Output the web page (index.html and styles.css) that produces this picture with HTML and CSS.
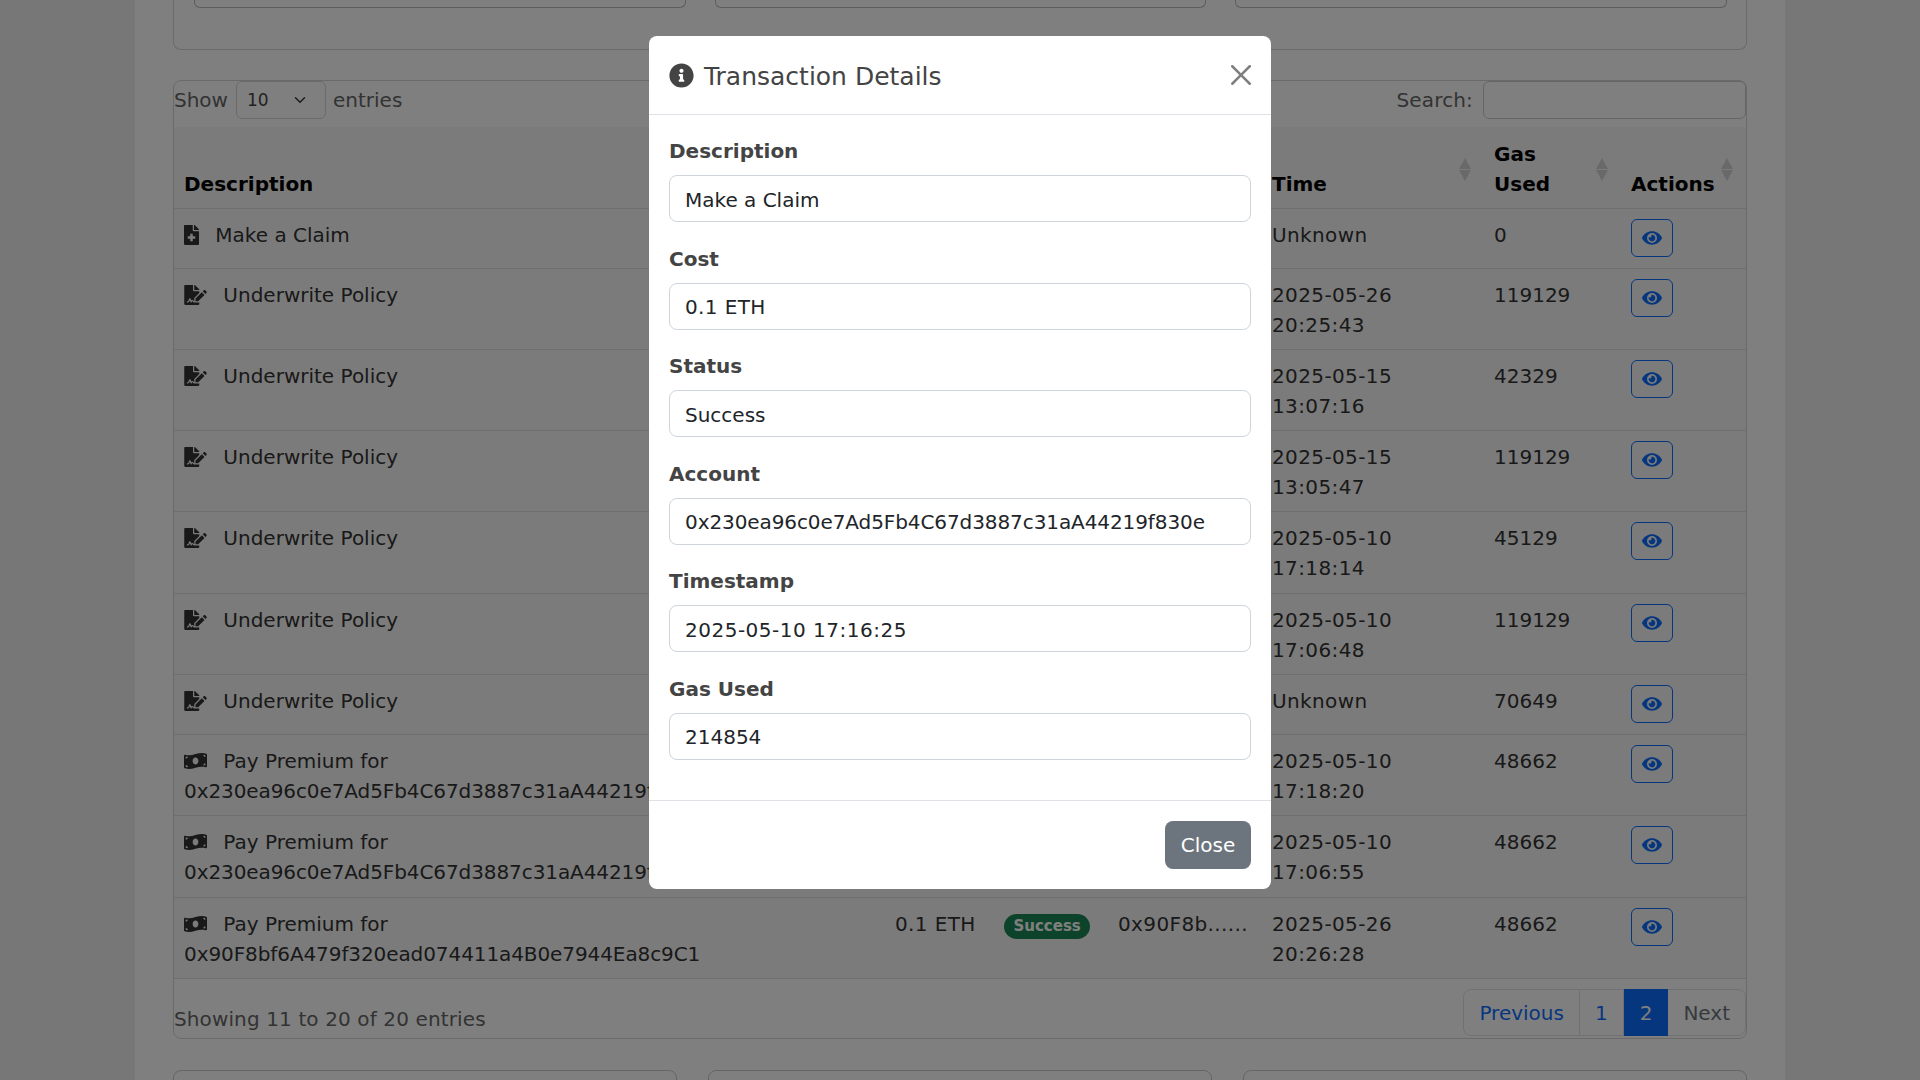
FILE: index.html
```html
<!DOCTYPE html>
<html lang="en">
<head>
    <meta charset="utf-8">
    <title>Transactions</title>
    <link rel="stylesheet" href="styles.css">
</head>
<body>
<svg class="icon-defs" xmlns="http://www.w3.org/2000/svg">
    <symbol id="i-eye" viewBox="0 0 576 512"><path d="M572.52 241.4C518.29 135.59 410.93 64 288 64S57.68 135.64 3.48 241.41a32.35 32.35 0 0 0 0 29.19C57.71 376.41 165.07 448 288 448s230.32-71.64 284.52-177.41a32.35 32.35 0 0 0 0-29.19zM288 400a144 144 0 1 1 144-144 143.93 143.93 0 0 1-144 144zm0-240a95.31 95.31 0 0 0-25.31 3.79 47.85 47.85 0 0 1-66.9 66.9A95.78 95.78 0 1 0 288 160z"/></symbol>
    <symbol id="i-info" viewBox="0 0 512 512"><path d="M256 8C119.043 8 8 119.083 8 256c0 136.997 111.043 248 248 248s248-111.003 248-248C504 119.083 392.957 8 256 8zm0 110c23.196 0 42 18.804 42 42s-18.804 42-42 42-42-18.804-42-42 18.804-42 42-42zm56 254c0 6.627-5.373 12-12 12h-88c-6.627 0-12-5.373-12-12v-24c0-6.627 5.373-12 12-12h12v-64h-12c-6.627 0-12-5.373-12-12v-24c0-6.627 5.373-12 12-12h64c6.627 0 12 5.373 12 12v100h12c6.627 0 12 5.373 12 12v24z"/></symbol>
    <symbol id="i-claim" viewBox="0 0 384 512"><path d="M377 105L279.1 7c-4.5-4.5-10.6-7-17-7H256v128h128v-6.1c0-6.3-2.5-12.4-7-16.9zm-153 31V0H24C10.7 0 0 10.7 0 24v464c0 13.3 10.7 24 24 24h336c13.3 0 24-10.7 24-24V160H248c-13.2 0-24-10.8-24-24zm64 160v48c0 4.4-3.6 8-8 8h-56v56c0 4.4-3.6 8-8 8h-48c-4.4 0-8-3.6-8-8v-56h-56c-4.4 0-8-3.6-8-8v-48c0-4.4 3.6-8 8-8h56v-56c0-4.4 3.6-8 8-8h48c4.4 0 8 3.6 8 8v56h56c4.4 0 8 3.6 8 8z"/></symbol>
    <symbol id="i-sign" viewBox="0 0 576 512"><path d="M218.17 424.14c-2.95-5.92-8.09-6.52-10.17-6.52s-7.22.59-10.02 6.19l-7.67 15.34c-6.37 12.78-25.03 11.37-29.48-2.09L144 386.59l-10.61 31.88c-5.89 17.66-22.38 29.53-41 29.53H80c-8.84 0-16-7.16-16-16s7.16-16 16-16h12.39c4.83 0 9.11-3.08 10.64-7.66l18.19-54.64c3.3-9.81 12.44-16.41 22.78-16.41s19.48 6.59 22.77 16.41l13.88 41.64c19.75-16.19 54.06-9.7 66 14.16 1.89 3.78 5.49 5.95 9.36 6.26v-82.12l128-127.09V160H248c-13.2 0-24-10.8-24-24V0H24C10.7 0 0 10.7 0 24v464c0 13.3 10.7 24 24 24h336c13.3 0 24-10.7 24-24v-40l-128-.11c-16.12-.31-30.58-9.28-37.83-23.75zM384 121.9c0-6.3-2.5-12.4-7-16.9L279.1 7c-4.5-4.5-10.6-7-17-7H256v128h128v-6.1zm-96 225.06V416h68.99l161.68-162.78-67.88-67.88L288 346.96zm280.54-179.63l-31.87-31.87c-9.94-9.94-26.07-9.94-36.01 0l-27.25 27.25 67.88 67.88 27.25-27.25c9.95-9.94 9.95-26.07 0-36.01z"/></symbol>
    <symbol id="i-money" viewBox="0 0 640 512"><path d="M621.16 54.46C582.37 38.19 543.55 32 504.75 32c-123.17-.01-246.33 62.34-369.5 62.34-30.89 0-61.76-3.92-92.65-13.72-3.47-1.1-6.95-1.62-10.35-1.62C15.04 79 0 92.32 0 110.81v317.26c0 12.63 7.23 24.6 18.84 29.46C57.63 473.81 96.45 480 135.25 480c123.17 0 246.34-62.35 369.51-62.35 30.89 0 61.76 3.92 92.65 13.72 3.47 1.1 6.95 1.62 10.35 1.62 17.21 0 32.25-13.32 32.25-31.81V83.93c-.01-12.64-7.24-24.6-18.85-29.47zM48 132.22c20.12 5.04 41.12 7.57 62.72 8.93C104.84 170.54 79 192.69 48 192.69v-60.47zm0 285v-47.78c34.37 0 62.18 27.27 63.71 61.4-22.53-1.81-43.59-6.31-63.71-13.62zM320 352c-44.19 0-80-42.99-80-96 0-53.02 35.82-96 80-96s80 42.98 80 96c0 53.03-35.83 96-80 96zm272 27.78c-17.52-4.39-35.71-6.85-54.32-8.44 5.87-26.08 27.5-45.88 54.32-49.28v57.72zm0-236.11c-30.89-3.91-54.86-29.7-55.81-61.55 19.54 2.17 38.09 6.23 55.81 12.66v48.89z"/></symbol>
</svg>

<div class="container">
    <div class="summary-card">
        <div class="summary-box"></div>
        <div class="summary-box"></div>
        <div class="summary-box"></div>
    </div>

    <div class="table-card">
        <div class="table-controls">
            <label class="length-label">Show
                <select class="length-select"><option>10</option></select>
                entries</label>
            <label class="search-label">Search: <input class="search-input" type="search"></label>
        </div>

        <table class="tx-table">
            <thead>
                <tr>
                    <th class="col-desc sortable">Description</th>
                    <th class="col-cost sortable">Cost</th>
                    <th class="col-status sortable">Status</th>
                    <th class="col-account sortable">Account</th>
                    <th class="col-time sortable">Time</th>
                    <th class="col-gas sortable">Gas<br>Used</th>
                    <th class="col-actions sortable">Actions</th>
                </tr>
            </thead>
            <tbody>
                <tr class="short-row">
                    <td><svg class="row-icon"><use href="#i-claim"/></svg> Make a Claim</td>
                    <td class="spaced">0.1 ETH</td>
                    <td><span class="badge">Success</span></td>
                    <td class="spaced">0x230ea......</td>
                    <td class="spaced">Unknown</td>
                    <td>0</td>
                    <td><button class="btn-view"><svg class="eye"><use href="#i-eye"/></svg></button></td>
                </tr>
                <tr>
                    <td><svg class="row-icon wide"><use href="#i-sign"/></svg> Underwrite Policy</td>
                    <td class="spaced">0.1 ETH</td>
                    <td><span class="badge">Success</span></td>
                    <td class="spaced">0x90F8b......</td>
                    <td class="spaced">2025-05-26<br>20:25:43</td>
                    <td>119129</td>
                    <td><button class="btn-view"><svg class="eye"><use href="#i-eye"/></svg></button></td>
                </tr>
                <tr>
                    <td><svg class="row-icon wide"><use href="#i-sign"/></svg> Underwrite Policy</td>
                    <td class="spaced">0.1 ETH</td>
                    <td><span class="badge">Success</span></td>
                    <td class="spaced">0x90F8b......</td>
                    <td class="spaced">2025-05-15<br>13:07:16</td>
                    <td>42329</td>
                    <td><button class="btn-view"><svg class="eye"><use href="#i-eye"/></svg></button></td>
                </tr>
                <tr>
                    <td><svg class="row-icon wide"><use href="#i-sign"/></svg> Underwrite Policy</td>
                    <td class="spaced">0.1 ETH</td>
                    <td><span class="badge">Success</span></td>
                    <td class="spaced">0x90F8b......</td>
                    <td class="spaced">2025-05-15<br>13:05:47</td>
                    <td>119129</td>
                    <td><button class="btn-view"><svg class="eye"><use href="#i-eye"/></svg></button></td>
                </tr>
                <tr>
                    <td><svg class="row-icon wide"><use href="#i-sign"/></svg> Underwrite Policy</td>
                    <td class="spaced">0.1 ETH</td>
                    <td><span class="badge">Success</span></td>
                    <td class="spaced">0x90F8b......</td>
                    <td class="spaced">2025-05-10<br>17:18:14</td>
                    <td>45129</td>
                    <td><button class="btn-view"><svg class="eye"><use href="#i-eye"/></svg></button></td>
                </tr>
                <tr>
                    <td><svg class="row-icon wide"><use href="#i-sign"/></svg> Underwrite Policy</td>
                    <td class="spaced">0.1 ETH</td>
                    <td><span class="badge">Success</span></td>
                    <td class="spaced">0x90F8b......</td>
                    <td class="spaced">2025-05-10<br>17:06:48</td>
                    <td>119129</td>
                    <td><button class="btn-view"><svg class="eye"><use href="#i-eye"/></svg></button></td>
                </tr>
                <tr class="short-row">
                    <td><svg class="row-icon wide"><use href="#i-sign"/></svg> Underwrite Policy</td>
                    <td class="spaced">0.1 ETH</td>
                    <td><span class="badge">Success</span></td>
                    <td class="spaced">0x90F8b......</td>
                    <td class="spaced">Unknown</td>
                    <td>70649</td>
                    <td><button class="btn-view"><svg class="eye"><use href="#i-eye"/></svg></button></td>
                </tr>
                <tr>
                    <td><svg class="row-icon wide"><use href="#i-money"/></svg> Pay Premium for<br><span class="address">0x230ea96c0e7Ad5Fb4C67d3887c31aA44219f830e</span></td>
                    <td class="spaced">0.1 ETH</td>
                    <td><span class="badge">Success</span></td>
                    <td class="spaced">0x230ea......</td>
                    <td class="spaced">2025-05-10<br>17:18:20</td>
                    <td>48662</td>
                    <td><button class="btn-view"><svg class="eye"><use href="#i-eye"/></svg></button></td>
                </tr>
                <tr>
                    <td><svg class="row-icon wide"><use href="#i-money"/></svg> Pay Premium for<br><span class="address">0x230ea96c0e7Ad5Fb4C67d3887c31aA44219f830e</span></td>
                    <td class="spaced">0.1 ETH</td>
                    <td><span class="badge">Success</span></td>
                    <td class="spaced">0x230ea......</td>
                    <td class="spaced">2025-05-10<br>17:06:55</td>
                    <td>48662</td>
                    <td><button class="btn-view"><svg class="eye"><use href="#i-eye"/></svg></button></td>
                </tr>
                <tr>
                    <td><svg class="row-icon wide"><use href="#i-money"/></svg> Pay Premium for<br><span class="address">0x90F8bf6A479f320ead074411a4B0e7944Ea8c9C1</span></td>
                    <td class="spaced">0.1 ETH</td>
                    <td><span class="badge">Success</span></td>
                    <td class="spaced">0x90F8b......</td>
                    <td class="spaced">2025-05-26<br>20:26:28</td>
                    <td>48662</td>
                    <td><button class="btn-view"><svg class="eye"><use href="#i-eye"/></svg></button></td>
                </tr>
            </tbody>
        </table>

        <div class="table-footer">
            <div class="table-info">Showing 11 to 20 of 20 entries</div>
            <ul class="pagination">
                <li class="page-item">Previous</li>
                <li class="page-item">1</li>
                <li class="page-item active">2</li>
                <li class="page-item disabled">Next</li>
            </ul>
        </div>
    </div>

    <div class="bottom-cards">
        <div class="bottom-card"></div>
        <div class="bottom-card"></div>
        <div class="bottom-card"></div>
    </div>
</div>

<div class="modal-backdrop"></div>
<div class="modal">
    <div class="modal-dialog">
        <div class="modal-header">
            <h5 class="modal-title"><svg class="title-icon"><use href="#i-info"/></svg> Transaction Details</h5>
            <svg class="btn-close" viewBox="0 0 16 16"><path d="M.293.293a1 1 0 0 1 1.414 0L8 6.586 14.293.293a1 1 0 1 1 1.414 1.414L9.414 8l6.293 6.293a1 1 0 0 1-1.414 1.414L8 9.414l-6.293 6.293a1 1 0 0 1-1.414-1.414L6.586 8 .293 1.707a1 1 0 0 1 0-1.414z"/></svg>
        </div>
        <div class="modal-body">
            <div class="field">
                <label class="field-label">Description</label>
                <input class="field-input" type="text" value="Make a Claim" readonly>
            </div>
            <div class="field">
                <label class="field-label">Cost</label>
                <input class="field-input spaced" type="text" value="0.1 ETH" readonly>
            </div>
            <div class="field">
                <label class="field-label">Status</label>
                <input class="field-input" type="text" value="Success" readonly>
            </div>
            <div class="field">
                <label class="field-label">Account</label>
                <input class="field-input address" type="text" value="0x230ea96c0e7Ad5Fb4C67d3887c31aA44219f830e" readonly>
            </div>
            <div class="field">
                <label class="field-label">Timestamp</label>
                <input class="field-input timestamp" type="text" value="2025-05-10 17:16:25" readonly>
            </div>
            <div class="field">
                <label class="field-label">Gas Used</label>
                <input class="field-input" type="text" value="214854" readonly>
            </div>
        </div>
        <div class="modal-footer">
            <button class="btn-close-modal">Close</button>
        </div>
    </div>
</div>
</body>
</html>
```

FILE: styles.css
```css
* {
    box-sizing: border-box;
}

html, body {
    height: 1080px;
    overflow: hidden;
}

body {
    margin: 0;
    background-color: #eeeeee;
    font-family: "DejaVu Sans", sans-serif;
    font-size: 20px;
    line-height: 30px;
    color: #333333;
    text-rendering: optimizeSpeed;
}

.icon-defs {
    display: none;
}

.spaced {
    letter-spacing: 0.38px;
}

.timestamp {
    letter-spacing: 0.5px;
}

.address {
    letter-spacing: -0.09px;
}

.container {
    width: 1650px;
    height: 1080px;
    margin: 0 auto;
    padding: 0 38px;
    background-color: #ffffff;
}

/* cards cut off by the scroll position */
.summary-card {
    display: grid;
    grid-template-columns: repeat(3, 1fr);
    gap: 29px;
    height: 50px;
    padding: 0 19px 0 20px;
    border: 1px solid #d5d5d5;
    border-top: 0;
    border-radius: 0 0 8px 8px;
}

.summary-box {
    height: 8px;
    border: 1px solid #bbbbbb;
    border-top: 0;
    border-radius: 0 0 6px 6px;
}

.bottom-cards {
    display: grid;
    grid-template-columns: repeat(3, 1fr);
    gap: 31px;
    margin-top: 31px;
}

.bottom-card {
    height: 100px;
    border: 1px solid #cccccc;
    border-radius: 8px;
}

/* table card */
.table-card {
    height: 959px;
    margin-top: 30px;
    border: 1px solid #d5d5d5;
    border-radius: 8px;
}

.table-controls {
    display: flex;
    justify-content: space-between;
    height: 46px;
    color: #666666;
}

.length-label, .search-label {
    display: flex;
    align-items: center;
    height: 38px;
}

.length-select {
    width: 90px;
    height: 38px;
    margin: 0 7px 0 8px;
    padding: 0 10px;
    border: 1px solid #d5d5d5;
    border-radius: 6px;
    appearance: none;
    background: #ffffff url("data:image/svg+xml,%3csvg xmlns='http://www.w3.org/2000/svg' viewBox='0 0 16 16'%3e%3cpath fill='none' stroke='%23343a40' stroke-linecap='round' stroke-linejoin='round' stroke-width='2' d='m2 5 6 6 6-6'/%3e%3c/svg%3e") no-repeat right 17px center / 16px 12px;
    font-family: "DejaVu Sans", sans-serif;
    font-size: 17px;
    color: #444444;
}

.search-label {
    letter-spacing: 0.15px;
}

.search-input {
    width: 263px;
    height: 38px;
    margin-left: 10px;
    border: 1px solid #cccccc;
    border-radius: 6px;
    background: #ffffff;
}

.tx-table {
    width: 100%;
    border-collapse: collapse;
    table-layout: fixed;
    background-color: #f7f7f7;
}

.tx-table th {
    position: relative;
    height: 81px;
    padding: 10px 10px 9px;
    border-bottom: 1px solid #dedede;
    vertical-align: bottom;
    text-align: left;
    color: #000000;
}

.sortable::before, .sortable::after {
    content: "";
    position: absolute;
    right: 13px;
    border-left: 6px solid transparent;
    border-right: 6px solid transparent;
}

.sortable::before {
    top: 31px;
    border-bottom: 11px solid #d2d2d2;
}

.sortable::after {
    top: 43px;
    border-top: 11px solid #d2d2d2;
}

.col-desc { width: 711px; }
.col-cost { width: 109px; }
.col-status { width: 114px; }
.col-account { width: 154px; }
.col-time { width: 222px; }
.col-gas { width: 137px; }

.tx-table td {
    height: 81.3px;
    padding: 11px 10px 9px;
    border-bottom: 1px solid #dedede;
    vertical-align: top;
    white-space: nowrap;
    overflow: hidden;
}

.tx-table .short-row td {
    height: 60px;
}

.row-icon {
    width: 15px;
    height: 20px;
    margin-right: 10px;
    vertical-align: -3px;
    fill: #333333;
}

.row-icon.wide {
    width: 23px;
}

.badge {
    display: inline-block;
    padding: 5px 9.5px;
    border-radius: 13px;
    background-color: #198754;
    font-size: 15px;
    font-weight: 700;
    line-height: 15px;
    color: #ffffff;
}

.btn-view {
    display: flex;
    align-items: center;
    justify-content: center;
    width: 42px;
    height: 38px;
    margin-top: -1px;
    padding: 0;
    border: 1px solid #0d6efd;
    border-radius: 6px;
    background: transparent;
}

.eye {
    width: 20px;
    height: 18px;
    fill: #0d6efd;
}

.table-footer {
    display: flex;
    justify-content: space-between;
    height: 60px;
    padding-top: 10px;
    color: #666666;
}

.table-info {
    padding-top: 15px;
    letter-spacing: 0.12px;
}

.pagination {
    display: flex;
    height: 47px;
    margin: 0;
    padding: 0;
    border: 1px solid #dee2e6;
    border-radius: 8px;
    list-style: none;
    color: #0d6efd;
}

.page-item {
    padding: 8px 15px;
    border-right: 1px solid #dee2e6;
}

.page-item.active {
    margin: -1px 0;
    padding: 9px 16px;
    border-right: 0;
    background-color: #0d6efd;
    color: #ffffff;
}

.page-item.disabled {
    border-right: 0;
    color: #6c757d;
}

/* modal */
.modal-backdrop {
    position: fixed;
    top: 0;
    left: 0;
    width: 100%;
    height: 100%;
    background-color: rgba(0, 0, 0, 0.5);
}

.modal {
    position: fixed;
    top: 36px;
    left: 649px;
    width: 622px;
}

.modal-dialog {
    border-radius: 8px;
    background-color: #ffffff;
    color: #444444;
}

.modal-header {
    display: flex;
    align-items: center;
    justify-content: space-between;
    height: 79px;
    padding: 0 20px;
    border-bottom: 1px solid #dee2e6;
}

.modal-title {
    margin: 0;
    padding-top: 4px;
    font-size: 25px;
    font-weight: 400;
    line-height: 38px;
}

.title-icon {
    width: 25px;
    height: 25px;
    margin-right: 2px;
    vertical-align: -3px;
    fill: #444444;
}

.btn-close {
    width: 20px;
    height: 20px;
    fill: #000000;
    opacity: 0.5;
}

.modal-body {
    padding: 21px 20px 18.5px;
}

.field {
    margin-bottom: 21.5px;
}

.field-label {
    display: block;
    margin-bottom: 9px;
    font-weight: 700;
}

.field-input {
    display: block;
    width: 100%;
    height: 47px;
    padding: 2px 15px 0;
    border: 1px solid #ced4da;
    border-radius: 8px;
    font-family: "DejaVu Sans", sans-serif;
    font-size: 20px;
    color: #212529;
}

.modal-footer {
    display: flex;
    justify-content: flex-end;
    padding: 20px;
    border-top: 1px solid #dee2e6;
}

.btn-close-modal {
    width: 86px;
    height: 48px;
    padding: 0;
    border: 0;
    border-radius: 8px;
    background-color: #6c757d;
    font-family: "DejaVu Sans", sans-serif;
    font-size: 20px;
    color: #ffffff;
}
```
